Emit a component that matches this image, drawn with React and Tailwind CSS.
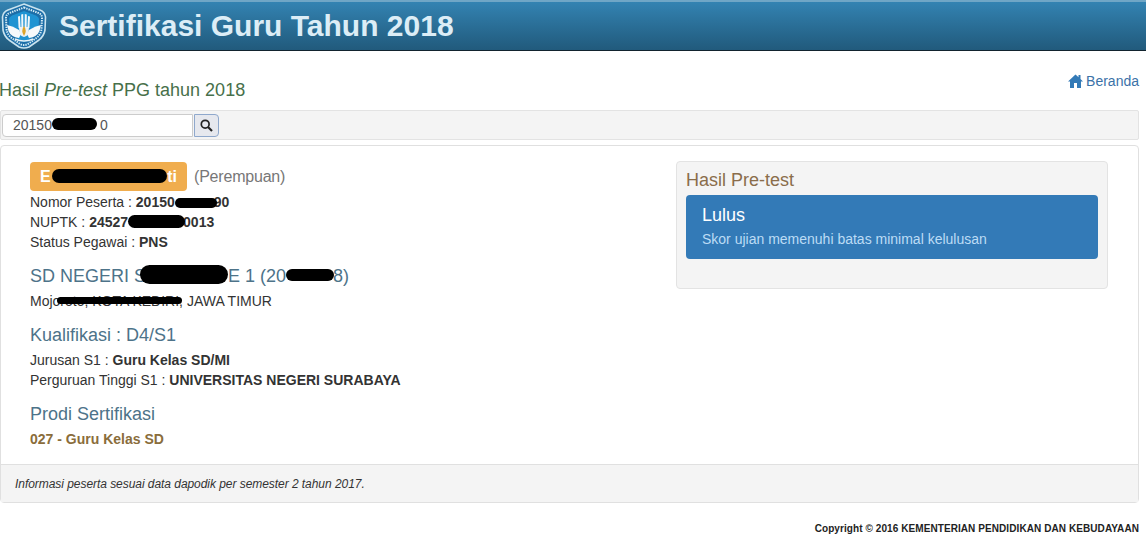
function Logo() {
    return (
        <svg width="46" height="46" viewBox="0 0 46 46" className="shrink-0 ml-px">
            <path d="M23 1 L39 7 Q44 9 44.5 14 L44 27 Q43 33 38 37 L28 44 Q23 46 18 44 L8 37 Q3 33 2 27 L1.5 14 Q2 9 7 7 Z" fill="#1c6ea8" stroke="#c9e3ef" strokeWidth="1.6" />
            <path d="M23 4.5 L37.5 10 Q41 11.5 41 15 L40.5 26 Q40 31 36 34.5 L27 41 Q23 43 19 41 L10 34.5 Q6 31 5.5 26 L5 15 Q5 11.5 8.5 10 Z" fill="none" stroke="#d5ecf5" strokeWidth="2" strokeDasharray="1.4 1" />
            <path d="M23 8 L35 12.5 Q38 14 38 16 L37.5 25 Q37 30 33 33 L26 38 Q23 40 20 38 L13 33 Q9 30 8.5 25 L8 16 Q8 14 11 12.5 Z" fill="#1f93d2" />
            <path d="M6 22 Q12 23 18 27 L20 31 L18 35 Q10 34 7.5 28 Z" fill="#f6f9fb" />
            <path d="M40 22 Q34 23 28 27 L26 31 L28 35 Q36 34 38.5 28 Z" fill="#f6f9fb" />
            <path d="M17 13.5 L19 13 L19.6 25 L17.6 25 Z M20.2 11.5 L22.2 11 L22.4 25 L20.4 25 Z M23.8 11 L25.8 11.5 L25.6 25 L23.6 25 Z M27 13 L29 13.5 L28.4 25 L26.4 25 Z" fill="#f2f7fa" />
            <path d="M18 24 H28 L27.4 31 Q23 37 18.6 31 Z" fill="#eef3f6" />
            <path d="M23 23 Q26.5 27.5 23 33 Q19.5 27.5 23 23 Z" fill="#dca52a" />
            <path d="M14 36 Q23 40 32 36" fill="none" stroke="#e8f2f6" strokeWidth="1.4" />
        </svg>
    );
}

// black marker strokes over the private parts of the text
function Blob({ className }) {
    return <span className={"absolute bg-black rounded-full " + className}></span>;
}

function Row({ label, value, children }) {
    return (
        <div className="relative h-5 leading-5 text-[14px] text-[#333]">
            {label} : <b>{value}</b>
            {children}
        </div>
    );
}

function Heading({ children, className = "" }) {
    return <div className={"relative text-[18px] leading-5 text-[#4d7389] " + className}>{children}</div>;
}

export default function App() {
    return (
        <div className="w-[1146px] h-[535px] overflow-hidden bg-white font-['Liberation_Sans',Arial,sans-serif]">
            <div className="h-[51px] flex items-center gap-[12px] bg-gradient-to-b from-[#3383b2] to-[#215a7c] border-b border-[#12232e] border-t-2 border-t-[#6fa6c6]">
                <Logo />
                <div className="text-[30px] font-bold text-[#dcedf6] leading-none">Sertifikasi Guru Tahun 2018</div>
            </div>

            <div className="h-[59px] flex justify-between pr-[7px]">
                <div className="text-[18px] text-[#47704a] pt-[29px] leading-5 -ml-px">
                    Hasil <i>Pre-test</i> PPG tahun 2018
                </div>
                <a className="flex items-center gap-[3px] h-5 mt-[20px] text-[14px] text-[#3b72a8]">
                    <svg width="15" height="14" viewBox="0 0 15 14">
                        <path d="M7.5 0.5 L10.5 3.2 V1 H12.5 V5 L15 7.5 H13 V14 H9 V9 H6 V14 H2 V7.5 H0 Z" fill="#337ab7" />
                    </svg>
                    Beranda
                </a>
            </div>

            <div className="w-[1139px] h-[30px] flex items-center gap-px pl-px bg-[#f4f4f4] border border-[#e3e3e3] rounded-[2px]">
                <div className="relative w-[191px] h-[23px] leading-[21px] pl-[10px] bg-white border border-[#ccc] rounded-l-[4px] text-[14px] text-[#555]">
                    20150<span className="ml-[48px]">0</span>
                    <Blob className="left-[49px] top-[3px] w-[45px] h-[12px]" />
                </div>
                <button className="w-[25px] h-[23px] flex items-center justify-center bg-[#e6e8ee] border border-[#8fa8cc] rounded-r-[4px]">
                    <svg width="13" height="13" viewBox="0 0 13 13">
                        <circle cx="5.2" cy="5.2" r="3.9" fill="none" stroke="#222" strokeWidth="1.7" />
                        <path d="M8 8 L12 12" stroke="#222" strokeWidth="2.2" />
                    </svg>
                </button>
            </div>

            <div className="w-[1139px] h-[358px] mt-[5px] flex flex-col bg-white border border-[#e0e0e0] rounded-[4px]">
                <div className="flex-1 flex pl-[29px] pr-[30px] pt-[15px]">
                    <div className="flex-1">
                        <div className="flex items-center gap-[7px] h-[31px]">
                            <span className="relative h-[29px] w-[157px] leading-[29px] pl-[10px] bg-[#f0ad4e] rounded-[4px] text-[16px] font-bold text-white">
                                E<span className="absolute right-[10px]">ti</span>
                                <Blob className="left-[22px] top-[7px] w-[115px] h-[14px]" />
                            </span>
                            <span className="text-[16px] tracking-[-0.2px] text-[#777]">(Perempuan)</span>
                        </div>
                        <Row label="Nomor Peserta" value="20150">
                            <span className="ml-[39px] font-bold">90</span>
                            <Blob className="left-[145px] top-[6px] w-[42px] h-[10px]" />
                        </Row>
                        <Row label="NUPTK" value="24527">
                            <span className="ml-[55px] font-bold">0013</span>
                            <Blob className="left-[98px] top-[3px] w-[57px] h-[13px]" />
                        </Row>
                        <Row label="Status Pegawai" value="PNS" />

                        <Heading className="mt-[14px]">
                            SD NEGERI S<span className="ml-[82px]">E 1 (20</span><span className="ml-[47px]">8)</span>
                            <Blob className="left-[110px] top-[-1px] w-[88px] h-[19px]" />
                            <Blob className="left-[256px] top-[3px] w-[48px] h-[12px]" />
                        </Heading>
                        <div className="relative mt-[5px] h-5 leading-5 text-[14px] text-[#333]">
                            Mojoroto, KOTA KEDIRI, JAWA TIMUR
                            <Blob className="left-[27px] top-[6px] w-[125px] h-[7px]" />
                        </div>

                        <Heading className="mt-[14px]">Kualifikasi : D4/S1</Heading>
                        <div className="mt-[5px]">
                            <Row label="Jurusan S1" value="Guru Kelas SD/MI" />
                            <Row label="Perguruan Tinggi S1" value="UNIVERSITAS NEGERI SURABAYA" />
                        </div>

                        <Heading className="mt-[14px]">Prodi Sertifikasi</Heading>
                        <div className="mt-[5px] h-5 leading-5 text-[14px] font-bold text-[#8a6d3b]">027 - Guru Kelas SD</div>
                    </div>

                    <div className="w-[432px] h-[128px] bg-[#f4f4f4] border border-[#e3e3e3] rounded-[4px] px-[9px]">
                        <div className="h-[33px] pt-[8px] text-[18px] leading-5 text-[#8a6d4b]">Hasil Pre-test</div>
                        <div className="h-[64px] pl-[16px] pt-[10px] bg-[#337ab7] rounded-[4px]">
                            <div className="text-[18px] leading-5 text-white">Lulus</div>
                            <div className="mt-[4px] text-[14px] leading-5 text-[#bcdcf5]">Skor ujian memenuhi batas minimal kelulusan</div>
                        </div>
                    </div>
                </div>

                <div className="h-[38px] pl-[14px] flex items-center bg-[#f4f4f4] border-t border-[#e0e0e0] text-[12px] tracking-[-0.05px] italic text-[#333]">
                    Informasi peserta sesuai data dapodik per semester 2 tahun 2017.
                </div>
            </div>

            <div className="w-[1139px] mt-[20px] text-right text-[10px] tracking-[0.08px] font-bold leading-3 text-[#222]">
                Copyright © 2016 KEMENTERIAN PENDIDIKAN DAN KEBUDAYAAN
            </div>
        </div>
    );
}
